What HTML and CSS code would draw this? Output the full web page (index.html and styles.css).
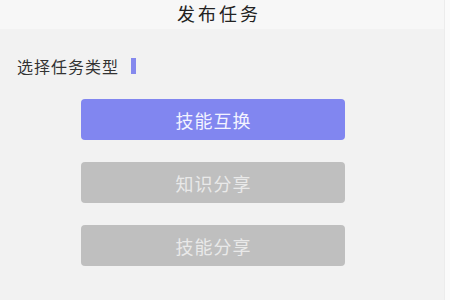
FILE: index.html
```html
<!DOCTYPE html>
<html lang="zh-CN">
<head>
    <meta charset="UTF-8">
    <meta name="viewport" content="width=device-width, initial-scale=1.0">
    <title>发布任务</title>
    <link rel="stylesheet" href="styles.css">
</head>
<body>
    <div class="page">
        <div class="header">发布任务</div>

        <div class="section-title">
            <span>选择任务类型</span>
            <span class="mark"></span>
        </div>

        <div class="type-list">
            <button class="type-btn active">技能互换</button>
            <button class="type-btn">知识分享</button>
            <button class="type-btn">技能分享</button>
        </div>
    </div>
</body>
</html>
```
FILE: styles.css
```css
body {
    margin: 0;
    background-color: #fbfbfb;
    font-family: "Noto Sans CJK SC", "Noto Sans", sans-serif;
}
.page {
    width: 444px;
    height: 300px;
    background-color: #f2f2f2;
    border-right: 1px solid #ececec;
}
.header {
    height: 29px;
    line-height: 27px;
    text-align: center;
    font-size: 18px;
    letter-spacing: 3px;
    color: #222;
    background-color: #f7f7f7;
    padding-right: 6px;
}
.section-title {
    display: flex;
    align-items: center;
    gap: 12px;
    padding: 27px 0 0 17px;
    height: 20px;
    font-size: 16px;
    letter-spacing: 1px;
    color: #333;
}
.mark {
    width: 5px;
    height: 16px;
    background-color: #8589ee;
}
.type-list {
    display: flex;
    flex-direction: column;
    align-items: flex-start;
    gap: 22px;
    padding: 23px 0 0 81px;
}
.type-btn {
    width: 264px;
    height: 41px;
    border: none;
    border-radius: 4px;
    background-color: #bfbfbf;
    color: #e9e9e9;
    font-family: inherit;
    font-size: 18px;
    letter-spacing: 1px;
    text-indent: 1px;
    cursor: pointer;
}
.type-btn.active {
    background-color: #8186f0;
    color: #f3f3ff;
}
```
